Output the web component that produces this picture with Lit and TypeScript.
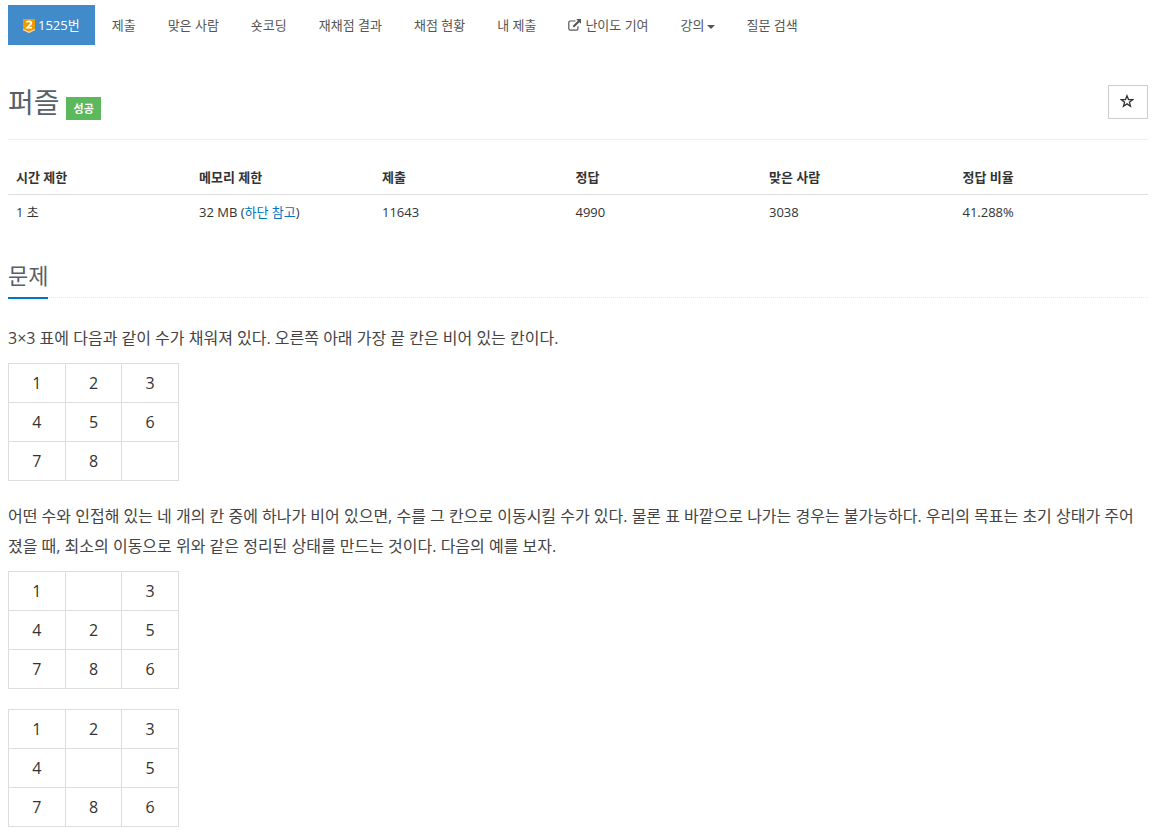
import { LitElement, html, css, nothing } from "lit";
import { customElement, property } from "lit/decorators.js";

type Cell = number | null;

@customElement("puzzle-board")
class PuzzleBoard extends LitElement {
  @property({ attribute: false }) rows: Cell[][] = [];

  static styles = css`
    :host {
      display: block;
      margin-bottom: 20px;
    }
    .board {
      width: 15%;
      table-layout: fixed;
      border-collapse: collapse;
      font-size: 16px;
      line-height: 22px;
      color: #333;
    }
    .cell {
      height: 22px;
      padding: 8px;
      border: 1px solid #ddd;
      text-align: center;
    }
  `;

  render() {
    return html`<table class="board">
      <tbody>
        ${this.rows.map(
          (row) => html`<tr>
            ${row.map((n) => html`<td class="cell">${n ?? nothing}</td>`)}
          </tr>`
        )}
      </tbody>
    </table>`;
  }
}

@customElement("app-root")
class AppRoot extends LitElement {
  static styles = css`
    :host {
      display: block;
      padding: 5px 10px 0 8px;
      background: #fff;
      color: #333;
      font-family: "Open Sans", "Noto Sans CJK KR", sans-serif;
      font-size: 13px;
      line-height: 20px;
    }
    .menu {
      display: flex;
      flex-wrap: wrap;
      gap: 2px;
      margin: 0;
      padding: 0;
      list-style: none;
    }
    .menu-link {
      display: flex;
      align-items: center;
      padding: 10px 15px;
      color: #555;
      text-decoration: none;
      white-space: nowrap;
    }
    .menu-link.active {
      background: #428bca;
      color: #fff;
    }
    .tier {
      width: 12px;
      height: 16px;
      margin-right: 3px;
    }
    .external {
      width: 13px;
      height: 12px;
      margin-right: 4px;
    }
    .caret {
      margin: 3px 0 0 2px;
      border: 4px solid transparent;
      border-top-color: #555;
      border-bottom-width: 0;
    }
    .page-header {
      display: flex;
      justify-content: space-between;
      align-items: flex-start;
      margin-top: 40px;
      padding-bottom: 20px;
      border-bottom: 1px solid #eee;
    }
    .title-group {
      display: flex;
      align-items: flex-end;
      gap: 6px;
    }
    .title {
      margin: 0;
      color: #585f69;
      font-size: 28px;
      font-weight: 400;
      line-height: 34px;
    }
    .label {
      margin-bottom: -1px;
      padding: 2px 7px 1px 8px;
      background: #5cb85c;
      color: #fff;
      font-size: 11px;
      font-weight: 700;
    }
    .favorite {
      display: flex;
      align-items: center;
      justify-content: center;
      width: 40px;
      height: 34px;
      padding: 0 2px 2px 0;
      border: 1px solid #ccc;
      background: #fff;
      color: #333;
    }
    .star {
      width: 14px;
      height: 14px;
    }
    .info {
      width: 100%;
      margin-top: 20px;
      border-collapse: collapse;
      table-layout: fixed;
    }
    .info-head,
    .info-cell {
      padding: 8px;
      line-height: 18px;
      text-align: left;
    }
    .info-head {
      width: 17%;
      border-bottom: 1px solid #ddd;
      font-weight: 700;
    }
    .info-head.limit {
      width: 16%;
    }
    .note {
      color: #0076c0;
      text-decoration: none;
    }
    .headline {
      display: flex;
      margin: 28px 0 25px;
      border-bottom: 1px dotted #e4e9f0;
    }
    .headline-text {
      margin: 0 0 -2px;
      padding-bottom: 4px;
      border-bottom: 2px solid #0076c0;
      color: #585f69;
      font-size: 22px;
      font-weight: 400;
      line-height: 36px;
    }
    .text {
      margin: 0 0 10px;
      color: #444;
      font-size: 16px;
      line-height: 30px;
      word-break: break-all;
    }
  `;

  render() {
    const menu = ["제출", "맞은 사람", "숏코딩", "재채점 결과", "채점 현황", "내 제출"];
    return html`
      <nav>
        <ul class="menu">
          <li>
            <a class="menu-link active" href="#problem">
              <svg class="tier" viewBox="0 0 12 16" aria-hidden="true">
                <path fill="#ec9a00" d="M0 2h12v10L6 15 0 12z" />
                <path fill="none" stroke="#ffd9a0" stroke-width="1.2" d="M0 12.6l6 2.8 6-2.8" />
                <path fill="none" stroke="#fff" stroke-width="1.7" d="M3.4 5.4Q4 4.4 6 4.4q2.3 0 2.3 1.6 0 1-1.4 2L4.2 10.6h4.8" />
              </svg>
              1525번
            </a>
          </li>
          ${menu.map((name) => html`<li><a class="menu-link" href="#menu">${name}</a></li>`)}
          <li>
            <a class="menu-link" href="#contribute">
              <svg class="external" viewBox="0 0 13 12" aria-hidden="true">
                <path fill="none" stroke="#555" stroke-width="1.2" d="M7.5 2H2.4Q.8 2 .8 3.6v6q0 1.6 1.6 1.6h6q1.6 0 1.6-1.6V7.2" />
                <path fill="#555" d="M8.2 0H13v4.8l-1.6-1.6-5.3 5.3-1.5-1.5 5.3-5.3z" />
              </svg>
              난이도 기여
            </a>
          </li>
          <li><a class="menu-link" href="#lecture">강의<span class="caret"></span></a></li>
          <li><a class="menu-link" href="#search">질문 검색</a></li>
        </ul>
      </nav>
      <main>
        <header class="page-header">
          <div class="title-group">
            <h1 class="title">퍼즐</h1>
            <span class="label">성공</span>
          </div>
          <button class="favorite" type="button" aria-label="즐겨찾기">
            <svg class="star" viewBox="0 0 14 14" aria-hidden="true">
              <path fill="none" stroke="currentColor" stroke-width="1.3" d="M7 1.8l1.5 3.7 4.1.2-3.2 2.5 1.1 4L7 9.9l-3.5 2.3 1.1-4L1.4 5.7l4.1-.2z" />
            </svg>
          </button>
        </header>
        <table class="info">
          <thead>
            <tr>
              <th class="info-head limit">시간 제한</th>
              <th class="info-head limit">메모리 제한</th>
              <th class="info-head">제출</th>
              <th class="info-head">정답</th>
              <th class="info-head">맞은 사람</th>
              <th class="info-head">정답 비율</th>
            </tr>
          </thead>
          <tbody>
            <tr>
              <td class="info-cell">1 초</td>
              <td class="info-cell">32 MB (<a class="note" href="#limit">하단 참고</a>)</td>
              <td class="info-cell">11643</td>
              <td class="info-cell">4990</td>
              <td class="info-cell">3038</td>
              <td class="info-cell">41.288%</td>
            </tr>
          </tbody>
        </table>
        <section>
          <div class="headline"><h2 class="headline-text">문제</h2></div>
          <p class="text">3×3 표에 다음과 같이 수가 채워져 있다. 오른쪽 아래 가장 끝 칸은 비어 있는 칸이다.</p>
          <puzzle-board .rows=${[[1, 2, 3], [4, 5, 6], [7, 8, null]]}></puzzle-board>
          <p class="text">어떤 수와 인접해 있는 네 개의 칸 중에 하나가 비어 있으면, 수를 그 칸으로 이동시킬 수가 있다. 물론 표 바깥으로 나가는 경우는 불가능하다. 우리의 목표는 초기 상태가 주어졌을 때, 최소의 이동으로 위와 같은 정리된 상태를 만드는 것이다. 다음의 예를 보자.</p>
          <puzzle-board .rows=${[[1, null, 3], [4, 2, 5], [7, 8, 6]]}></puzzle-board>
          <puzzle-board .rows=${[[1, 2, 3], [4, null, 5], [7, 8, 6]]}></puzzle-board>
        </section>
      </main>
    `;
  }
}
